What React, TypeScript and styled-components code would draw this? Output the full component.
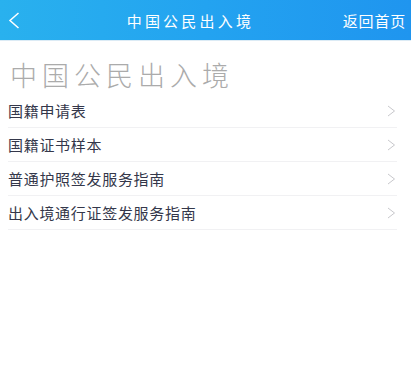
import React from "react";
import styled, { createGlobalStyle } from "styled-components";

const Global = createGlobalStyle`
  html, body { margin: 0; padding: 0; background: #fff; }
  body { font-family: "Noto Sans CJK SC", "Noto Sans", sans-serif; }
`;

const Page = styled.div`
  width: 411px;
  min-height: 375px;
  background: #fff;
`;

const Header = styled.header`
  height: 40px;
  display: flex;
  align-items: center;
  background: linear-gradient(90deg, #29b1ee 0%, #23a3f0 50%, #1f95ef 100%);
  border-bottom: 1px solid #dcebf5;
  color: #fff;
`;

const BackButton = styled.div`
  width: 36px;
  height: 40px;
  display: flex;
  align-items: center;
  padding-left: 8px;
  box-sizing: border-box;
`;

const Title = styled.div`
  flex: 1;
  text-align: center;
  font-size: 15px;
  letter-spacing: 3.2px;
  padding-left: 2px;
`;

const HomeLink = styled.div`
  font-size: 15px;
  letter-spacing: 0.8px;
  padding-right: 5px;
`;

const Heading = styled.h1`
  margin: 0;
  padding: 14px 0 0 10px;
  height: 39px;
  font-size: 27px;
  line-height: 40px;
  font-weight: 300;
  letter-spacing: 5px;
  color: #ababab;
`;

const List = styled.ul`
  list-style: none;
  margin: 0 14px 0 8px;
  padding: 0;
`;

const Row = styled.li`
  height: 33px;
  display: flex;
  align-items: center;
  justify-content: space-between;
  border-bottom: 1px solid #f1f1f3;
  font-size: 15px;
  letter-spacing: 0.7px;
  color: #34374a;
`;

const Chevron = styled.svg`
  width: 9px;
  height: 12px;
  margin-right: 1px;
`;

const items = ["国籍申请表", "国籍证书样本", "普通护照签发服务指南", "出入境通行证签发服务指南"];

export default function App() {
  return (
    <Page>
      <Global />
      <Header>
        <BackButton>
          <svg width="12" height="17" viewBox="0 0 12 17">
            <path d="M10.5 1 L2 8.5 L10.5 16" fill="none" stroke="#fff" strokeWidth="1.5" />
          </svg>
        </BackButton>
        <Title>中国公民出入境</Title>
        <HomeLink>返回首页</HomeLink>
      </Header>
      <Heading>中国公民出入境</Heading>
      <List>
        {items.map((t) => (
          <Row key={t}>
            <span>{t}</span>
            <Chevron viewBox="0 0 9 12">
              <path d="M1 1 L7.5 6 L1 11" fill="none" stroke="#c8c8cc" strokeWidth="1" />
            </Chevron>
          </Row>
        ))}
      </List>
    </Page>
  );
}
